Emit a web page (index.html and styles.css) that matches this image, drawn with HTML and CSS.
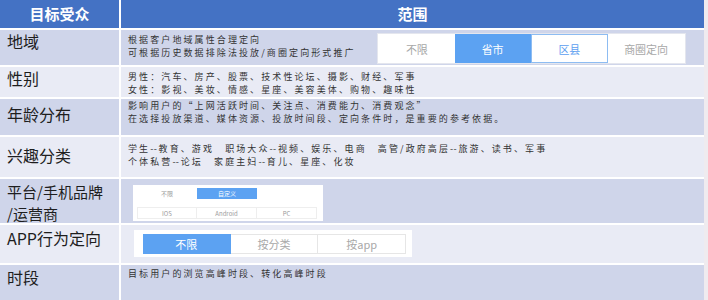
FILE: index.html
```html
<!DOCTYPE html>
<html lang="zh-CN">
<head>
    <meta charset="UTF-8">
    <meta name="viewport" content="width=device-width, initial-scale=1.0">
    <title>目标受众</title>
    <link rel="stylesheet" href="styles.css">
</head>
<body>
    <div class="table">
        <div class="head">目标受众</div>
        <div class="head">范围</div>

        <div class="label dark row-region">地域</div>
        <div class="cell dark row-region split">
            <div class="text">
                <div>根据客户地域属性合理定向</div>
                <div>可根据历史数据排除法投放/商圈定向形式推广</div>
            </div>
            <div class="region-tabs">
                <span class="tab">不限</span>
                <span class="tab active">省市</span>
                <span class="tab outlined">区县</span>
                <span class="tab">商圈定向</span>
            </div>
        </div>

        <div class="label light row-gender">性别</div>
        <div class="cell light row-gender text">
            <div>男性：汽车、房产、股票、技术性论坛、摄影、财经、军事</div>
            <div>女性：影视、美妆、情感、星座、美容美体、购物、趣味性</div>
        </div>

        <div class="label dark row-age">年龄分布</div>
        <div class="cell dark row-age text">
            <div>影响用户的“上网活跃时间、关注点、消费能力、消费观念”</div>
            <div>在选择投放渠道、媒体资源、投放时间段、定向条件时，是重要的参考依据。</div>
        </div>

        <div class="label light row-interest">兴趣分类</div>
        <div class="cell light row-interest text">
            <div>学生<span class="dash">--</span>教育、游戏　职场大众<span class="dash">--</span>视频、娱乐、电商　高管/政府高层<span class="dash">--</span>旅游、读书、军事</div>
            <div>个体私营<span class="dash">--</span>论坛　家庭主妇<span class="dash">--</span>育儿、星座、化妆</div>
        </div>

        <div class="label dark row-platform">平台/手机品牌<br>/运营商</div>
        <div class="cell dark row-platform">
            <div class="platform-box">
                <div class="mini-row">
                    <span class="mini">不限</span>
                    <span class="mini active">自定义</span>
                </div>
                <div class="mini-row">
                    <span class="mini boxed">IOS</span>
                    <span class="mini boxed">Android</span>
                    <span class="mini boxed">PC</span>
                </div>
            </div>
        </div>

        <div class="label light row-app">APP行为定向</div>
        <div class="cell light row-app">
            <div class="app-tabs">
                <span class="app-tab active">不限</span>
                <span class="app-tab">按分类</span>
                <span class="app-tab">按app</span>
            </div>
        </div>

        <div class="label dark row-time">时段</div>
        <div class="cell dark row-time text">
            <div>目标用户的浏览高峰时段、转化高峰时段</div>
        </div>
    </div>
</body>
</html>
```

FILE: styles.css
```css
body {
    margin: 0;
    background-color: #efebef;
    font-family: 'Noto Sans CJK SC', 'Noto Sans', sans-serif;
}

.table {
    width: 704px;
    height: 300px;
    display: grid;
    grid-template-columns: 119px 1fr;
    grid-template-rows: 28px 35px 30px 36px 40px 44px 38px 35px;
    gap: 2px;
    background-color: #fff;
}

.head {
    background-color: #4472c4;
    color: #fff;
    font-size: 15px;
    font-weight: bold;
    text-align: center;
    line-height: 28px;
}

.dark {
    background-color: #cfd5ea;
}

.light {
    background-color: #e9ebf5;
}

.label {
    font-size: 16px;
    line-height: 20px;
    color: #1e1e1e;
    padding-left: 7px;
    padding-top: var(--label-top);
    white-space: nowrap;
}

.label.row-platform {
    font-size: 15px;
    line-height: 22px;
}

.cell {
    padding-left: 7px;
    padding-top: var(--text-top);
}

.text {
    font-size: 9px;
    line-height: 13px;
    color: #333;
    letter-spacing: 2.1px;
    white-space: nowrap;
}

.dash {
    letter-spacing: 0.3px;
    margin-right: 1.5px;
}

.row-region { --label-top: 1px; --text-top: 3px; }
.row-gender { --label-top: 1px; --text-top: 3px; }
.row-age { --label-top: 5px; --text-top: 0; }
.row-interest { --label-top: 8px; --text-top: 5px; }
.row-platform { --label-top: 2px; --text-top: 0; }
.row-app { --label-top: 3px; --text-top: 0; }
.row-time { --label-top: 2px; --text-top: 2px; }

.split {
    display: flex;
    justify-content: space-between;
    align-items: flex-start;
    padding-top: 0;
}

.split .text {
    padding-top: 3px;
}

/* region selector */
.region-tabs {
    box-sizing: border-box;
    width: 309px;
    height: 31px;
    margin-top: 3px;
    margin-right: 18px;
    padding: 0 1px;
    display: flex;
    background-color: #fff;
    border: 1px solid #e4e6ee;
    letter-spacing: 0;
}

.tab {
    flex: 1;
    display: flex;
    align-items: center;
    justify-content: center;
    font-size: 11px;
    color: #a8a8a8;
    box-sizing: border-box;
}

.tab.active {
    background-color: #5ca2f2;
    color: #fff;
}

.tab.outlined {
    border: 1px solid #8dbcf2;
    color: #5c9ef0;
}

/* platform selector */
.platform-box {
    box-sizing: border-box;
    width: 190px;
    height: 36px;
    margin: 6px 0 0 5px;
    padding: 3px 4px 2px;
    background-color: #fff;
    display: flex;
    flex-direction: column;
    gap: 8px;
}

.mini-row {
    display: flex;
}

.mini {
    box-sizing: border-box;
    width: 60px;
    height: 11px;
    display: flex;
    align-items: center;
    justify-content: center;
    font-size: 6px;
    color: #9a9a9a;
}

.mini.active {
    background-color: #5ca2f2;
    color: #fff;
}

.mini.boxed {
    height: 12px;
    border: 1px solid #eeeeee;
}

.mini.boxed + .mini.boxed {
    border-left: none;
}

/* app selector */
.app-tabs {
    box-sizing: border-box;
    width: 278px;
    height: 27px;
    margin: 5px 0 0 6px;
    padding: 4px 6px 3px 9px;
    background-color: #fff;
    display: flex;
}

.app-tab {
    flex: 1;
    display: flex;
    align-items: center;
    justify-content: center;
    font-size: 11px;
    color: #a8a8a8;
    border: 1px solid #e6e6e6;
    border-left: none;
}

.app-tab.active {
    background-color: #5ca2f2;
    border-color: #5ca2f2;
    color: #fff;
}
```
